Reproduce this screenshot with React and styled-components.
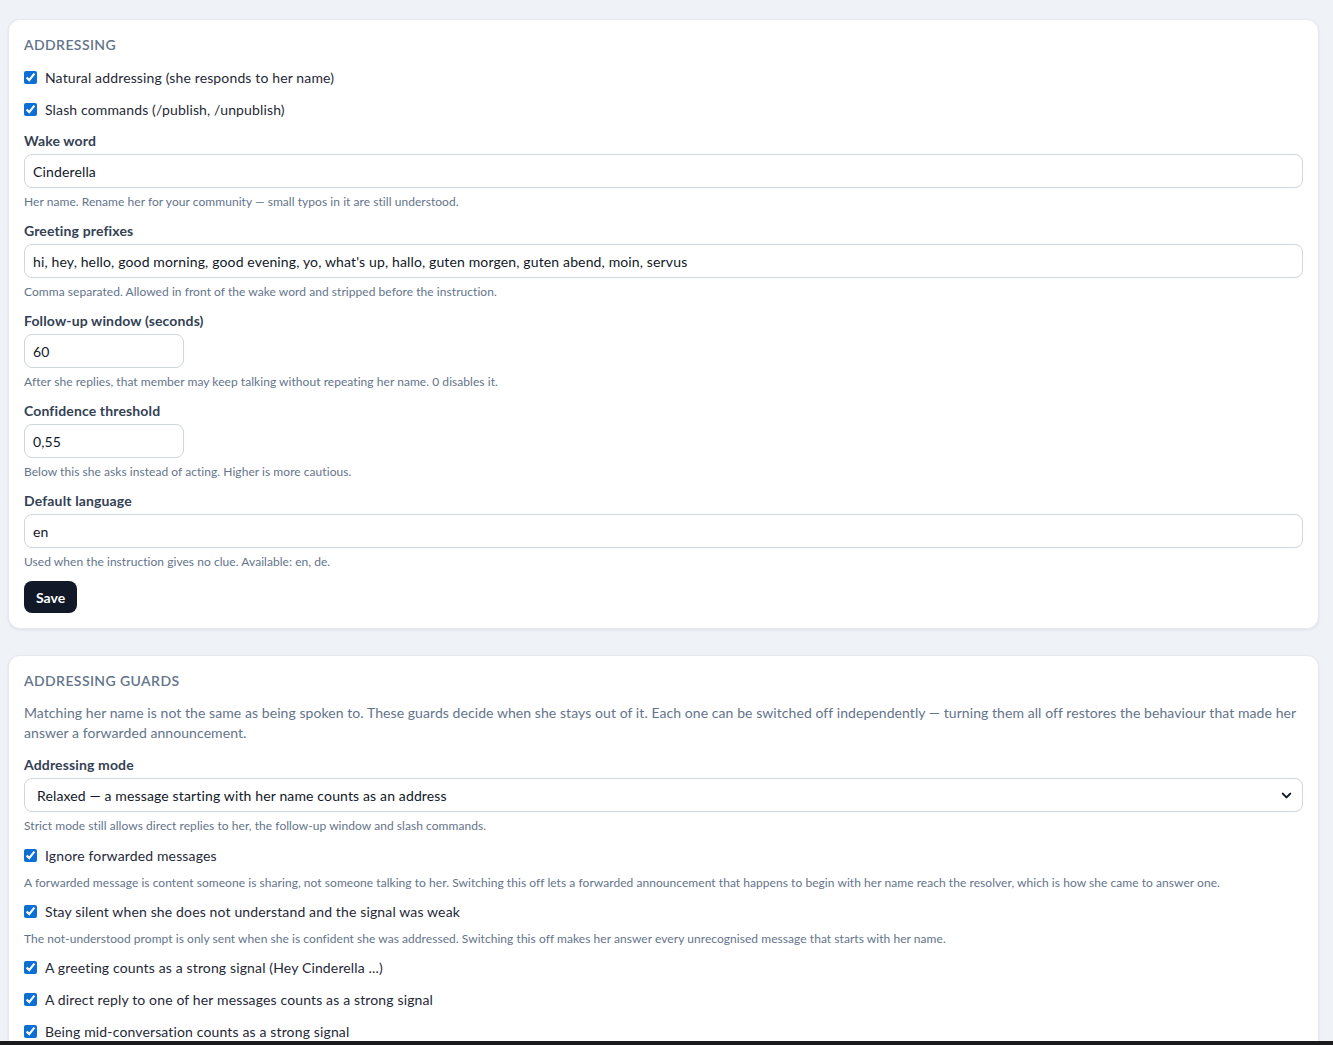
import React from 'react'
import styled, { createGlobalStyle } from 'styled-components'
import { ChevronDown } from 'lucide-react'

const GlobalStyle = createGlobalStyle`
  html, body {
    margin: 0;
    background: #eff2f7;
  }
  body {
    font-family: Lato, "Noto Sans", sans-serif;
    color: #1f2937;
    font-size: 14px;
    letter-spacing: 0.14px;
  }
  * { box-sizing: border-box; }
`

const Page = styled.main`
  display: flex;
  flex-direction: column;
  gap: 26px;
  padding: 19px 14px 40px 8px;
`

const Card = styled.section`
  display: flex;
  flex-direction: column;
  gap: 11px;
  background: #fff;
  border-radius: 12px;
  border: 1px solid #e5e9f0;
  box-shadow: 0 1px 3px rgba(15, 23, 42, 0.08);
  padding: 15px;
`

const Heading = styled.h2`
  margin: 0 0 1px;
  font-size: 14px;
  line-height: 20px;
  font-weight: 600;
  letter-spacing: 0.4px;
  text-transform: uppercase;
  color: #64748b;
`

const Intro = styled.p`
  margin: 0 0 1px;
  font-size: 14px;
  line-height: 20px;
  letter-spacing: 0.07px;
  color: #64748b;
`

const CheckRow = styled.label`
  display: flex;
  align-items: center;
  gap: 8px;
  height: 20px;
  font-size: 14px;
  color: #1f2937;
  margin-bottom: ${p => (p.tight ? -1 : 1)}px;

  input {
    margin: 0;
    width: 13px;
    height: 13px;
    accent-color: #0b6fd6;
  }
`

const Field = styled.div`
  display: flex;
  flex-direction: column;
`

const Label = styled.label`
  font-size: 14px;
  line-height: 20px;
  font-weight: 700;
  color: #334155;
  margin-bottom: 3px;
`

const TextInput = styled.input`
  width: ${p => (p.short ? '160px' : '100%')};
  height: 34px;
  border: 1px solid #cfd6de;
  border-radius: 8px;
  padding: 0 8px;
  font: inherit;
  font-size: 14px;
  letter-spacing: 0.14px;
  color: #111827;
  background: #fff;
`

const SelectWrap = styled.div`
  position: relative;

  svg {
    position: absolute;
    right: 9px;
    top: 10px;
    color: #111827;
    pointer-events: none;
  }
`

const Select = styled.select`
  appearance: none;
  width: 100%;
  height: 34px;
  border: 1px solid #cfd6de;
  border-radius: 8px;
  padding: 0 12px;
  font: inherit;
  font-size: 14px;
  letter-spacing: 0.14px;
  color: #111827;
  background: #fff;
`

const Hint = styled.div`
  margin-top: ${p => (p.under ? 0 : 6)}px;
  margin-bottom: ${p => (p.under ? -1 : 0)}px;
  font-size: 12px;
  line-height: 16px;
  letter-spacing: 0.05px;
  color: #64748b;
`

const SaveButton = styled.button`
  align-self: flex-start;
  height: 32px;
  padding: 0 12px;
  border: none;
  border-radius: 8px;
  background: #111827;
  color: #fff;
  font: inherit;
  font-size: 14px;
  font-weight: 700;
`

const BottomBar = styled.div`
  position: fixed;
  left: 0;
  right: 0;
  bottom: 0;
  height: 4px;
  background: #1b1b1d;
`

const Check = ({ children, tight }) => (
  <CheckRow tight={tight}>
    <input type="checkbox" defaultChecked />
    {children}
  </CheckRow>
)

const TextField = ({ label, value, hint, short }) => (
  <Field>
    <Label>{label}</Label>
    <TextInput defaultValue={value} short={short} />
    <Hint>{hint}</Hint>
  </Field>
)

export default function App() {
  return (
    <>
      <GlobalStyle />
      <Page>
        <Card>
          <Heading>Addressing</Heading>
          <Check>Natural addressing (she responds to her name)</Check>
          <Check>Slash commands (/publish, /unpublish)</Check>
          <TextField
            label="Wake word"
            value="Cinderella"
            hint="Her name. Rename her for your community — small typos in it are still understood."
          />
          <TextField
            label="Greeting prefixes"
            value="hi, hey, hello, good morning, good evening, yo, what's up, hallo, guten morgen, guten abend, moin, servus"
            hint="Comma separated. Allowed in front of the wake word and stripped before the instruction."
          />
          <TextField
            short
            label="Follow-up window (seconds)"
            value="60"
            hint="After she replies, that member may keep talking without repeating her name. 0 disables it."
          />
          <TextField
            short
            label="Confidence threshold"
            value="0,55"
            hint="Below this she asks instead of acting. Higher is more cautious."
          />
          <TextField
            label="Default language"
            value="en"
            hint="Used when the instruction gives no clue. Available: en, de."
          />
          <SaveButton>Save</SaveButton>
        </Card>

        <Card>
          <Heading>Addressing guards</Heading>
          <Intro>
            Matching her name is not the same as being spoken to. These guards decide when she stays
            out of it. Each one can be switched off independently — turning them all off restores the
            behaviour that made her answer a forwarded announcement.
          </Intro>
          <Field>
            <Label>Addressing mode</Label>
            <SelectWrap>
              <Select defaultValue="relaxed">
                <option value="relaxed">Relaxed — a message starting with her name counts as an address</option>
                <option value="strict">Strict</option>
              </Select>
              <ChevronDown size={15} strokeWidth={3.2} />
            </SelectWrap>
            <Hint>Strict mode still allows direct replies to her, the follow-up window and slash commands.</Hint>
          </Field>
          <Check tight>Ignore forwarded messages</Check>
          <Hint under>
            A forwarded message is content someone is sharing, not someone talking to her. Switching this off lets a forwarded announcement that happens to begin with her name reach the resolver, which is how she came to answer one.
          </Hint>
          <Check tight>Stay silent when she does not understand and the signal was weak</Check>
          <Hint under>
            The not-understood prompt is only sent when she is confident she was addressed. Switching this off makes her answer every unrecognised message that starts with her name.
          </Hint>
          <Check>A greeting counts as a strong signal (Hey Cinderella ...)</Check>
          <Check>A direct reply to one of her messages counts as a strong signal</Check>
          <Check>Being mid-conversation counts as a strong signal</Check>
        </Card>
      </Page>
      <BottomBar />
    </>
  )
}
